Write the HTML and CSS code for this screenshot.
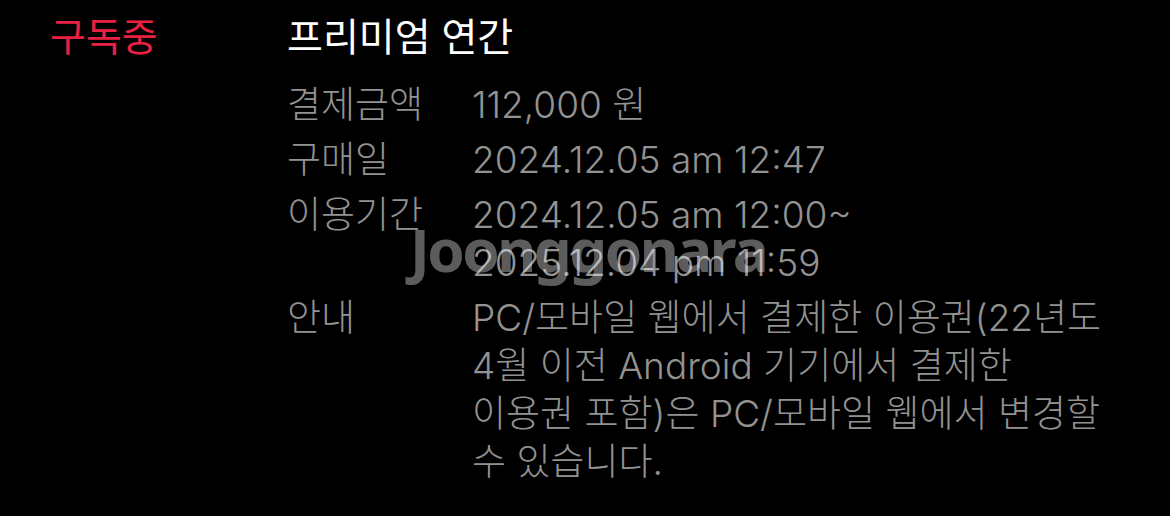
FILE: index.html
```html
<!DOCTYPE html>
<html lang="ko">
<head>
<meta charset="utf-8">
<link rel="stylesheet" href="styles.css">
</head>
<body>
<div class="page">
  <div class="status">구독중</div>
  <div class="main">
    <div class="title">프리미엄 연간</div>
    <div class="details">
      <div class="label">결제금액</div>
      <div class="value">112,000 원</div>
      <div class="label">구매일</div>
      <div class="value">2024.12.05 am 12:47</div>
      <div class="label">이용기간</div>
      <div class="value">2024.12.05 am 12:00~<br>2025.12.04 pm 11:59</div>
      <div class="label">안내</div>
      <div class="value">PC/모바일 웹에서 결제한 이용권(22년도<br>4월 이전 Android 기기에서 결제한<br>이용권 포함)은 PC/모바일 웹에서 변경할<br>수 있습니다.</div>
    </div>
  </div>
  <div class="watermark">Joonggonara</div>
</div>
</body>
</html>
```

FILE: styles.css
```css
html, body {
  margin: 0;
  padding: 0;
  background: #000;
}
body {
  width: 1170px;
  height: 516px;
  overflow: hidden;
  font-family: Inter, "Noto Sans CJK KR", sans-serif;
  font-weight: 300;
  font-size: 37px;
  line-height: 48px;
}
.page {
  position: relative;
  display: flex;
  padding: 13px 0 0 50px;
}
.status {
  width: 237px;
  flex: none;
  color: #ea2043;
  font-weight: 400;
  font-size: 39px;
}
.main {
  display: flex;
  flex-direction: column;
}
.title {
  color: #fff;
  font-weight: 400;
  font-size: 39px;
  margin-bottom: 20px;
}
.details {
  display: grid;
  grid-template-columns: 185px auto;
  row-gap: 7px;
  color: #929292;
}
.watermark {
  position: absolute;
  left: 410px;
  top: 213px;
  font-family: "Noto Sans", sans-serif;
  font-weight: 700;
  font-size: 60px;
  line-height: 72px;
  letter-spacing: -2.5px;
  color: rgba(255, 255, 255, 0.36);
}
```
